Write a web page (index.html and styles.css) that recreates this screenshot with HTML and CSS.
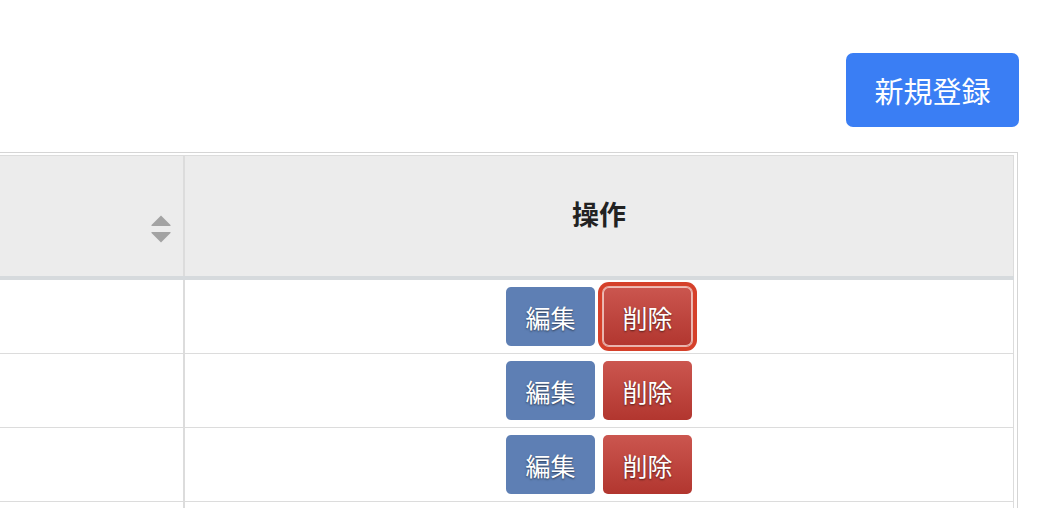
FILE: index.html
```html
<!DOCTYPE html>
<html lang="ja">
<head>
<meta charset="utf-8">
<link rel="stylesheet" href="styles.css">
</head>
<body>
<div class="page">
  <div class="toolbar">
    <button class="btn-new">新規登録</button>
  </div>
  <div class="table-wrap">
    <table class="grid">
      <thead>
        <tr>
          <th class="col-name">
            <svg class="sort" width="22" height="30" viewBox="0 0 22 30">
              <path d="M11 1.5 L20.5 11 Q21 12 20 12 L2 12 Q1 12 1.5 11 Z" fill="#a3a3a3"/>
              <path d="M11 28.5 L20.5 19 Q21 18 20 18 L2 18 Q1 18 1.5 19 Z" fill="#a3a3a3"/>
            </svg>
          </th>
          <th class="col-ops"><span class="th-label">操作</span></th>
        </tr>
      </thead>
      <tbody>
        <tr>
          <td class="name"></td>
          <td class="ops"><button class="btn btn-edit">編集</button><button class="btn btn-del focus">削除</button></td>
        </tr>
        <tr>
          <td class="name"></td>
          <td class="ops"><button class="btn btn-edit">編集</button><button class="btn btn-del">削除</button></td>
        </tr>
        <tr>
          <td class="name"></td>
          <td class="ops"><button class="btn btn-edit">編集</button><button class="btn btn-del">削除</button></td>
        </tr>
        <tr>
          <td class="name"></td>
          <td class="ops"></td>
        </tr>
      </tbody>
    </table>
  </div>
</div>
</body>
</html>
```

FILE: styles.css
```css
html, body {
  margin: 0;
  padding: 0;
  background: #fff;
  overflow: hidden;
}
body {
  font-family: "Noto Sans CJK JP", "Noto Sans", sans-serif;
}
.page {
  width: 1058px;
  margin-left: -40px;
}
.toolbar {
  display: flex;
  justify-content: flex-end;
  padding-top: 53px;
  width: 1059px;
}
.btn-new {
  width: 173px;
  height: 74px;
  border: 0;
  border-radius: 7px;
  background: #3a7ef4;
  color: #fff;
  font-family: inherit;
  font-size: 29px;
  font-weight: 400;
  padding: 0;
}
.table-wrap {
  margin-top: 25px;
  border: 1px solid #d5d5d5;
  padding: 2px 3px 0 2px;
}
.grid {
  width: 100%;
  border-collapse: collapse;
  border: 1px solid #dcdcdc;
}
.grid th {
  background: #ececec;
  height: 120px;
  padding: 0;
  border-bottom: 4px solid #d6dadd;
  font-size: 27px;
  font-weight: 700;
  color: #222;
}
.th-label {
  display: inline-block;
  margin-bottom: 6px;
}
.col-name {
  width: 219px;
  border-right: 2px solid #dcdcdc;
  text-align: right;
  vertical-align: middle;
}
.sort {
  display: block;
  margin: 26px 11px 0 auto;
}
.col-ops {
  text-align: center;
}
.grid td {
  height: 73px;
  padding: 0;
  border-bottom: 1px solid #dcdcdc;
  vertical-align: middle;
}
.grid td.name {
  border-right: 2px solid #dcdcdc;
}
.ops {
  text-align: center;
  font-size: 0;
}
.btn {
  display: inline-block;
  vertical-align: middle;
  width: 89px;
  height: 59px;
  border: 0;
  border-radius: 5px;
  padding: 0;
  color: #fff;
  font-family: inherit;
  font-size: 25px;
  text-shadow: 0 1px 2px rgba(0, 0, 0, 0.55);
}
.btn + .btn {
  margin-left: 8px;
}
.btn-edit {
  background: #5e7fb4;
}
.btn-del {
  background: linear-gradient(#cb564f, #b2362f);
}
.btn-del.focus {
  box-shadow: inset 0 0 0 1px rgba(255, 235, 230, 0.7), 0 0 0 1px #e9b3ab, 0 0 0 5px #d5402a;
  border-radius: 6px;
}
```
